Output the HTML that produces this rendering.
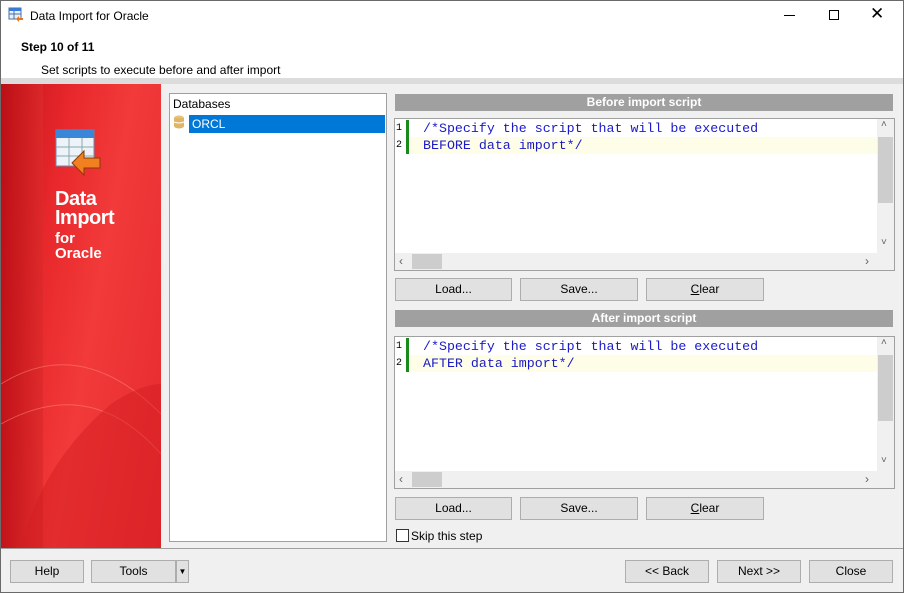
<!DOCTYPE html>
<html><head><style>
*{box-sizing:border-box;margin:0;padding:0}
body{width:904px;height:593px;position:relative;background:#f0f0f0;font-family:"Liberation Sans",sans-serif;font-size:12px;color:#000;overflow:hidden}
.a{position:absolute}
.btn{position:absolute;background:#e1e1e1;border:1px solid #adadad;text-align:center;line-height:21px;font-size:12px}
.hdr{position:absolute;background:#a0a0a0;color:#fff;font-weight:bold;text-align:center;line-height:17px;font-size:12px}
.ed{position:absolute;background:#fff;border:1px solid #a0a0a0}
.code{position:absolute;left:28px;font-family:"Liberation Mono",monospace;font-size:13.3px;color:#1a1ac8;white-space:pre;line-height:17px}
.ln{position:absolute;left:1px;font-family:"Liberation Mono",monospace;font-size:10px;line-height:17px}
</style></head><body>
<div class="a" style="left:0;top:0;width:904px;height:80px;background:#fff"></div>
<div class="a" style="left:0;top:0;width:904px;height:593px;border:1px solid #6a6a6a;pointer-events:none;z-index:5"></div>
<svg class="a" style="left:8px;top:7px" width="17" height="17"><rect x="1" y="1" width="12" height="11" fill="#e8f0ff" stroke="#4a6fa5"/><rect x="1" y="1" width="12" height="3" fill="#3a7bd5"/><line x1="1" y1="7" x2="13" y2="7" stroke="#4a6fa5"/><line x1="6" y1="4" x2="6" y2="12" stroke="#4a6fa5"/><path d="M8 12 L11 9 L11 11 L15 11 L15 13 L11 13 L11 15 Z" fill="#e8731a"/></svg>
<div class="a" style="left:30px;top:9px;font-size:12px">Data Import for Oracle</div>
<div class="a" style="left:784px;top:15px;width:11px;height:1px;background:#000"></div>
<div class="a" style="left:829px;top:10px;width:10px;height:10px;border:1px solid #000"></div>
<div class="a" style="left:870px;top:4px;font-size:17px">✕</div>
<div class="a" style="left:21px;top:40px;font-weight:bold">Step 10 of 11</div>
<div class="a" style="left:41px;top:63px">Set scripts to execute before and after import</div>
<div class="a" style="left:0;top:78px;width:904px;height:6px;background:#dcdcdc"></div>
<div class="a" style="left:1px;top:84px;width:160px;height:464px;background:linear-gradient(100deg,#c4121a 0%,#e8282c 30%,#f23a3a 55%,#e52a2e 100%)"></div>
<div class="a" style="left:1px;top:84px;width:42px;height:464px;background:linear-gradient(90deg,#b80e15,#dc2a2a);opacity:.8"></div>
<svg class="a" style="left:1px;top:84px" width="160" height="464"><path d="M0 300 Q80 250 160 330" stroke="#ff8a80" stroke-width="1" fill="none" opacity=".5"/><path d="M0 340 Q90 290 160 370" stroke="#ff8a80" stroke-width="1" fill="none" opacity=".5"/><path d="M20 464 Q40 380 110 320 Q140 300 160 300 L160 464Z" fill="#d41e22" opacity=".5"/></svg>
<svg class="a" style="left:54px;top:128px" width="50" height="50"><rect x="2" y="2" width="38" height="36" fill="#eef3fa" stroke="#6a89b5"/><rect x="2" y="2" width="38" height="8" fill="#3a86d8"/><line x1="2" y1="19" x2="40" y2="19" stroke="#8aa"/><line x1="2" y1="28" x2="40" y2="28" stroke="#8aa"/><line x1="15" y1="10" x2="15" y2="38" stroke="#8aa"/><line x1="28" y1="10" x2="28" y2="38" stroke="#8aa"/><path d="M18 35 L30 23 L30 30 L46 30 L46 40 L30 40 L30 47 Z" fill="#f08020" stroke="#8a3a08"/></svg>
<div class="a" style="left:55px;top:190px;color:#fff;font-weight:bold;font-size:20px;line-height:19px;letter-spacing:-0.5px">Data<br>Import</div>
<div class="a" style="left:55px;top:231px;color:#fff;font-weight:bold;font-size:15px;line-height:15px">for<br>Oracle</div>
<div class="a" style="left:169px;top:93px;width:218px;height:449px;background:#fff;border:1px solid #a0a0a0"></div>
<div class="a" style="left:173px;top:97px">Databases</div>
<svg class="a" style="left:173px;top:115px" width="12" height="14"><ellipse cx="6" cy="3" rx="5" ry="2.5" fill="#e8c27a"/><rect x="1" y="3" width="10" height="8" fill="#e0b565"/><ellipse cx="6" cy="11" rx="5" ry="2.5" fill="#e0b565"/><path d="M1 7 Q6 9 11 7" stroke="#fff" fill="none"/></svg>
<div class="a" style="left:189px;top:115px;width:196px;height:18px;background:#0078d7;color:#fff;padding-left:3px;line-height:18px">ORCL</div>
<div class="hdr" style="left:395px;top:94px;width:498px;height:17px">Before import script</div>
<div class="ed" style="left:394px;top:118px;width:501px;height:153px">
<div class="a" style="left:11px;top:1px;width:3px;height:34px;background:#1a8a1a"></div>
<div class="a" style="left:14px;top:18px;width:468px;height:17px;background:#fefee8"></div>
<div class="ln" style="top:1px">1</div><div class="ln" style="top:18px">2</div>
<div class="code" style="top:1px">/*Specify the script that will be executed
BEFORE data import*/</div>
<div class="a" style="right:0;top:0;width:17px;height:134px;background:#f0f0f0"><div class="a" style="left:1px;top:18px;width:15px;height:66px;background:#cdcdcd"></div><div class="a" style="left:4px;top:0;font-size:10px;color:#606060">˄</div><div class="a" style="left:4px;top:118px;font-size:10px;color:#606060">˅</div></div>
<div class="a" style="left:0;bottom:0;width:499px;height:17px;background:#f0f0f0"><div class="a" style="left:17px;top:1px;width:30px;height:15px;background:#cdcdcd"></div><div class="a" style="left:4px;top:1px;color:#606060">‹</div><div class="a" style="left:470px;top:1px;color:#606060">›</div></div>
</div>
<div class="btn" style="left:395px;top:278px;width:117px;height:23px">Load...</div>
<div class="btn" style="left:520px;top:278px;width:118px;height:23px">Save...</div>
<div class="btn" style="left:646px;top:278px;width:118px;height:23px"><u>C</u>lear</div>
<div class="hdr" style="left:395px;top:310px;width:498px;height:17px">After import script</div>
<div class="ed" style="left:394px;top:336px;width:501px;height:153px">
<div class="a" style="left:11px;top:1px;width:3px;height:34px;background:#1a8a1a"></div>
<div class="a" style="left:14px;top:18px;width:468px;height:17px;background:#fefee8"></div>
<div class="ln" style="top:1px">1</div><div class="ln" style="top:18px">2</div>
<div class="code" style="top:1px">/*Specify the script that will be executed
AFTER data import*/</div>
<div class="a" style="right:0;top:0;width:17px;height:134px;background:#f0f0f0"><div class="a" style="left:1px;top:18px;width:15px;height:66px;background:#cdcdcd"></div><div class="a" style="left:4px;top:0;font-size:10px;color:#606060">˄</div><div class="a" style="left:4px;top:118px;font-size:10px;color:#606060">˅</div></div>
<div class="a" style="left:0;bottom:0;width:499px;height:17px;background:#f0f0f0"><div class="a" style="left:17px;top:1px;width:30px;height:15px;background:#cdcdcd"></div><div class="a" style="left:4px;top:1px;color:#606060">‹</div><div class="a" style="left:470px;top:1px;color:#606060">›</div></div>
</div>
<div class="btn" style="left:395px;top:497px;width:117px;height:23px">Load...</div>
<div class="btn" style="left:520px;top:497px;width:118px;height:23px">Save...</div>
<div class="btn" style="left:646px;top:497px;width:118px;height:23px"><u>C</u>lear</div>
<div class="a" style="left:396px;top:529px;width:13px;height:13px;border:1px solid #333;background:#fff"></div>
<div class="a" style="left:411px;top:529px">Skip this step</div>
<div class="a" style="left:0;top:548px;width:904px;height:1px;background:#a0a0a0"></div>
<div class="btn" style="left:10px;top:560px;width:74px;height:23px">Help</div>
<div class="btn" style="left:91px;top:560px;width:85px;height:23px">Tools</div>
<div class="btn" style="left:176px;top:560px;width:13px;height:23px;font-size:8px">▼</div>
<div class="btn" style="left:625px;top:560px;width:84px;height:23px">&lt;&lt; Back</div>
<div class="btn" style="left:717px;top:560px;width:84px;height:23px">Next &gt;&gt;</div>
<div class="btn" style="left:809px;top:560px;width:84px;height:23px">Close</div>
</body></html>
